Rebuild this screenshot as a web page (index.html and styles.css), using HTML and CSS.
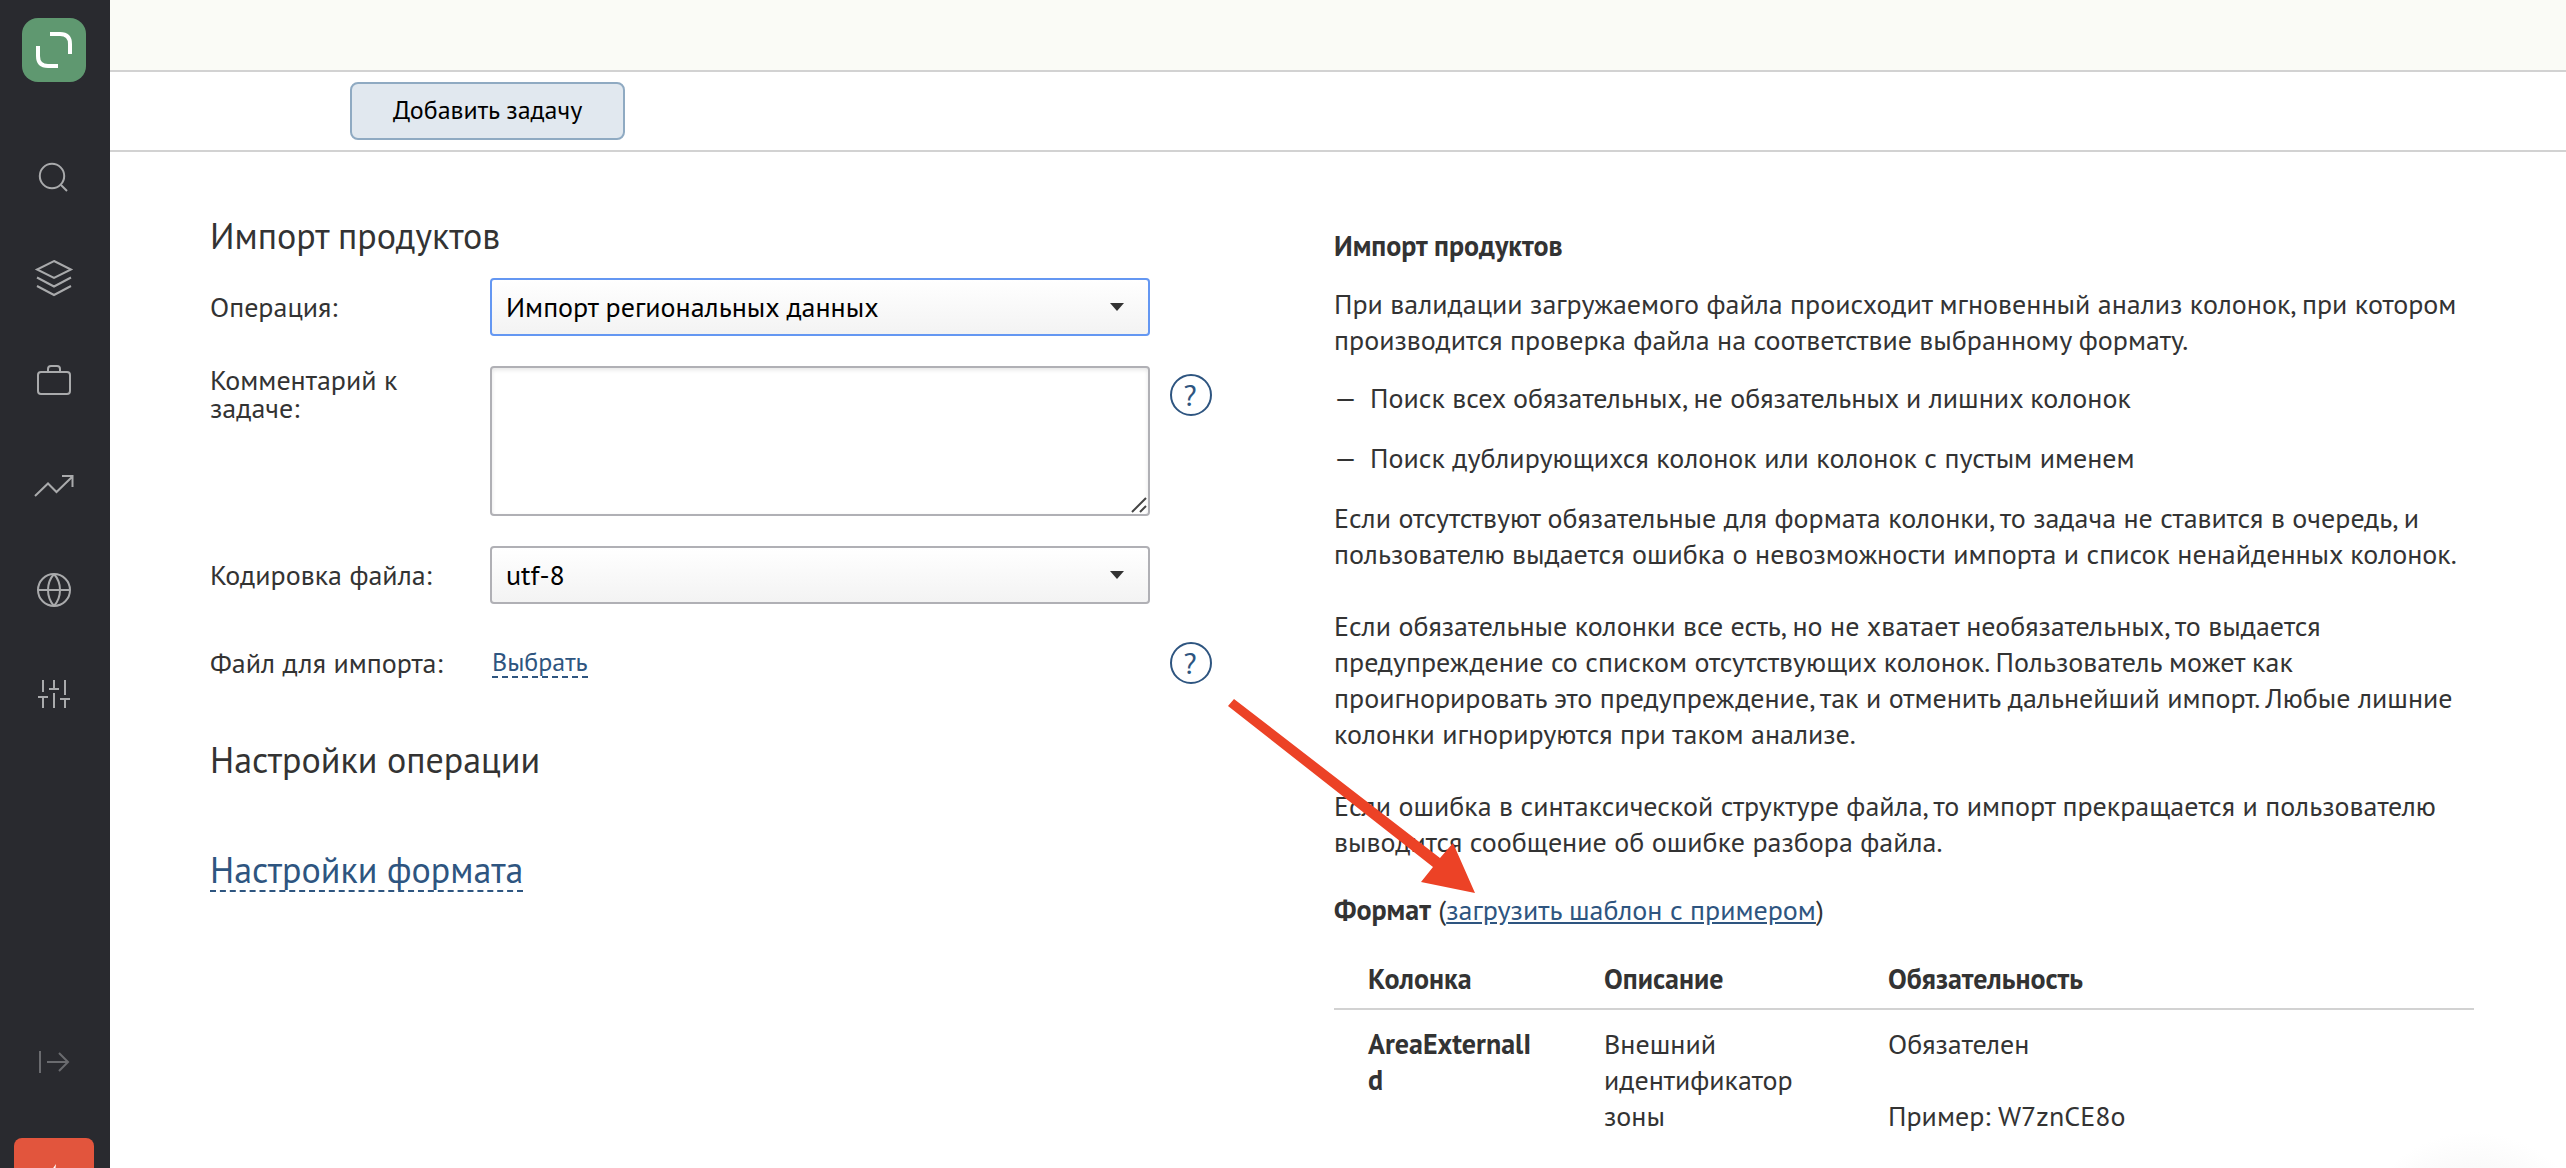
FILE: index.html
```html
<!DOCTYPE html>
<html lang="ru">
<head>
<meta charset="utf-8">
<meta name="viewport" content="width=device-width, initial-scale=1">
<title>Импорт продуктов</title>
<link rel="stylesheet" href="styles.css">
</head>
<body>
<nav class="sidebar" aria-label="Главное меню">
  <a class="logo" href="#" aria-label="Главная">
    <svg width="64" height="64" viewBox="0 0 64 64" fill="none" stroke="#fff" stroke-width="4">
      <path d="M28 16h10q10 0 10 10v10M16 28v10q0 10 10 10h10"/>
    </svg>
  </a>
  <ul class="menu">
    <li><a href="#" aria-label="Поиск"><svg viewBox="0 0 40 40"><circle cx="18" cy="21" r="12.200"/><path d="M27 30l6 6"/></svg></a></li>
    <li><a href="#" aria-label="Продукты"><svg viewBox="0 0 40 40"><path d="M20 2l17 8.500L20 19 3 10.500zM3 18.500l17 9 17-9M3 27l17 9 17-9"/></svg></a></li>
    <li><a href="#" aria-label="Проекты"><svg viewBox="0 0 40 40"><rect x="4" y="9" width="32" height="22" rx="3"/><path d="M14 9V6q0-3 3-3h6q3 0 3 3v3"/></svg></a></li>
    <li><a href="#" aria-label="Аналитика"><svg viewBox="0 0 40 40"><path d="M1 29l13-12.500 8.500 8.500L39 9M28 9h10.500v11"/></svg></a></li>
    <li><a href="#" aria-label="Сайты"><svg viewBox="0 0 40 40"><circle cx="20" cy="19" r="16"/><path d="M4 19h32M20 3c-8 9-8 23 0 32M20 3c8 9 8 23 0 32"/></svg></a></li>
    <li><a href="#" aria-label="Настройки"><svg viewBox="0 0 40 40"><path d="M9 5v12M4 22h10M9 22v11M20 5v9M15 14h10M20 18v15M31 5v15M26 24h10M31 24v9"/></svg></a></li>
  </ul>
  <button class="expand" type="button" aria-label="Развернуть меню"><svg viewBox="0 0 40 40"><path d="M6 9v22M13 20h21M25 11l9 9-9 9"/></svg></button>
  <a class="alert" href="#" aria-label="Уведомления"><svg viewBox="0 0 40 40"><path d="M22 0L8 20h10l-2 20 16-24H20z"/></svg></a>
</nav>
<div class="page">
  <header class="topbar"></header>
  <div class="toolbar"><button class="add" type="button">Добавить задачу</button></div>
  <main class="content">
    <form class="form">
      <h1 class="title">Импорт продуктов</h1>
      <div class="field">
        <label for="operation">Операция:</label>
        <div class="select active"><select id="operation"><option>Импорт региональных данных</option></select></div>
      </div>
      <div class="field top">
        <label for="comment">Комментарий к задаче:</label>
        <div class="area">
          <textarea id="comment"></textarea>
          <svg class="grip" width="16" height="16" viewBox="0 0 16 16" aria-hidden="true"><path d="M1 15L15 1M9 15l6-6"/></svg>
        </div>
        <button class="help" type="button" aria-label="Справка о комментарии">?</button>
      </div>
      <div class="field">
        <label for="encoding">Кодировка файла:</label>
        <div class="select"><select id="encoding"><option>utf-8</option></select></div>
      </div>
      <div class="field">
        <span>Файл для импорта:</span>
        <div class="file"><a class="dashed" href="#">Выбрать</a></div>
        <button class="help" type="button" aria-label="Справка о файле">?</button>
      </div>
      <h2 class="title operation">Настройки операции</h2>
      <h2 class="title"><a class="dashed" href="#">Настройки формата</a></h2>
    </form>
    <section class="info">
      <p><b>Импорт продуктов</b></p>
      <p>При валидации загружаемого файла происходит мгновенный анализ колонок, при котором производится проверка файла на соответствие выбранному формату.</p>
      <ul class="checks">
        <li>Поиск всех обязательных, не обязательных и лишних колонок</li>
        <li>Поиск дублирующихся колонок или колонок с пустым именем</li>
      </ul>
      <p>Если отсутствуют обязательные для формата колонки, то задача не ставится в очередь, и пользователю выдается ошибка о невозможности импорта и список ненайденных колонок.</p>
      <p class="spaced">Если обязательные колонки все есть, но не хватает необязательных, то выдается предупреждение со списком отсутствующих колонок. Пользователь может как проигнорировать это предупреждение, так и отменить дальнейший импорт. Любые лишние колонки игнорируются при таком анализе.</p>
      <p class="spaced">Если ошибка в синтаксической структуре файла, то импорт прекращается и пользователю выводится сообщение об ошибке разбора файла.</p>
      <p class="format"><b>Формат</b> (<a href="#">загрузить шаблон с примером</a>)</p>
      <table class="columns">
        <colgroup><col class="col-name"><col class="col-about"><col></colgroup>
        <thead><tr><th>Колонка</th><th>Описание</th><th>Обязательность</th></tr></thead>
        <tbody><tr><td class="name">AreaExternalId</td><td>Внешний идентификатор зоны</td><td>Обязателен<br><br>Пример: W7znCE8o</td></tr></tbody>
      </table>
      <svg class="pointer" width="248" height="194" viewBox="0 0 248 194" aria-hidden="true"><path d="M6 0l206 159 13-15 22 50-54-11 12-15L0 7z"/></svg>
    </section>
  </main>
</div>
<div class="glow" aria-hidden="true"></div>
</body>
</html>
```
FILE: styles.css
```css
* { box-sizing: border-box; }

body {
  margin: 0;
  display: flex;
  height: 100vh;
  overflow: hidden;
  background: #fff;
  color: #333;
  font: 28px/36px "PT Sans", "Noto Sans", sans-serif;
}

button, select, textarea { font: inherit; }
a { color: #2e5580; }

.sidebar {
  flex: none;
  width: 110px;
  display: flex;
  flex-direction: column;
  align-items: center;
  padding: 18px 2px 0 0;
  background: #292a2f;
}
.sidebar svg { display: block; }
.logo { border-radius: 16px; background: #5f9870; }
.menu {
  display: grid;
  gap: 64px;
  margin: 73px 0 0;
  padding: 0;
  list-style: none;
}
.menu svg, .expand svg {
  width: 40px;
  height: 40px;
  fill: none;
  stroke: #a9aaac;
  stroke-width: 2;
}
.expand { margin-top: auto; padding: 0; border: 0; background: none; }
.expand svg { stroke: #6a6b6f; }
.alert {
  flex: none;
  width: 80px;
  height: 30px;
  margin-top: 56px;
  padding-top: 26px;
  overflow: hidden;
  border-radius: 8px 8px 0 0;
  background: #e2553d;
}
.alert svg { width: 40px; height: 40px; margin: 0 auto; fill: #fff; }

.page { flex: 1; min-width: 0; }
.topbar { height: 72px; border-bottom: 2px solid #d2d2d2; background: #fafbf6; }
.toolbar { padding: 10px 240px; border-bottom: 2px solid #d2d2d2; }
.add {
  display: block;
  height: 58px;
  padding: 0 41px 2px;
  border: 2px solid #8faac2;
  border-radius: 8px;
  background: #e1e8ef;
  color: #000;
  font-size: 26px;
}

.content {
  display: grid;
  grid-template-columns: 1124fr 1140fr;
  padding: 0 92px 0 100px;
}
.form { padding-top: 60px; }
.title { margin: 0 0 62px; font-size: 36px; font-weight: 400; line-height: 48px; }
.form h1 { margin-bottom: 18px; }
.operation { margin-top: 44px; }
.field {
  display: grid;
  grid-template-columns: 280px minmax(0, 660px) 62px;
  align-items: center;
  min-height: 58px;
  margin-bottom: 30px;
}
.field label { padding-right: 40px; line-height: 28px; }
.field.top { align-items: start; }
.help {
  width: 42px;
  height: 42px;
  margin-left: 20px;
  padding: 0 2px 0 0;
  border: 2px solid #2e5580;
  border-radius: 50%;
  background: none;
  color: #2e5580;
  font-size: 30px;
}
.field.top .help { margin-top: 8px; }
.select, .area { position: relative; }
.select select {
  display: block;
  appearance: none;
  width: 100%;
  height: 58px;
  padding: 0 14px;
  border: 2px solid #b0b0b5;
  border-radius: 4px;
  background: linear-gradient(#fff, #f3f3f3);
  color: #000;
}
.select.active select { border-color: #6497f2; }
.select::after {
  content: "";
  position: absolute;
  top: 25px;
  right: 26px;
  border: 7px solid transparent;
  border-top: 8px solid #333;
  border-bottom: 0;
}
textarea {
  display: block;
  width: 100%;
  height: 150px;
  border: 2px solid #b0b0b5;
  border-radius: 4px;
  box-shadow: inset 0 2px 4px #0000001a;
  resize: vertical;
}
textarea::-webkit-resizer { background: none; }
.grip {
  position: absolute;
  right: 3px;
  bottom: 3px;
  fill: none;
  stroke: #444;
  stroke-width: 2;
  pointer-events: none;
}
.file { padding: 0 0 2px 2px; font-size: 26px; }
.dashed {
  display: inline-block;
  border-bottom: 2px dashed #2e5580;
  line-height: 28px;
  text-decoration: none;
}
.title .dashed { line-height: 40px; }

.info { position: relative; padding-top: 76px; }
.info p { margin: 0 0 22px; }
.info .spaced { margin-top: 36px; }
.info .format { margin-top: 32px; }
.checks { margin: 0; padding: 0; list-style: none; }
.checks li { display: flex; margin-bottom: 24px; }
.checks li::before { content: "—"; width: 36px; }
.columns { width: 100%; table-layout: fixed; border-collapse: collapse; }
.columns th, .columns td { padding: 11px 34px; text-align: left; vertical-align: top; }
.columns th { border-bottom: 2px solid #d2d2d2; }
.columns td { padding-top: 16px; }
.col-name { width: 236px; }
.col-about { width: 284px; }
.columns .name { font-weight: 700; word-break: break-all; }
.pointer { position: absolute; top: 547px; left: -106px; fill: #ec4226; pointer-events: none; }

.glow {
  position: fixed;
  right: 0;
  bottom: 0;
  width: 184px;
  height: 36px;
  background: radial-gradient(circle at 50% 120px, #f9f9f9 80px, #fff 120px);
  pointer-events: none;
}
```
